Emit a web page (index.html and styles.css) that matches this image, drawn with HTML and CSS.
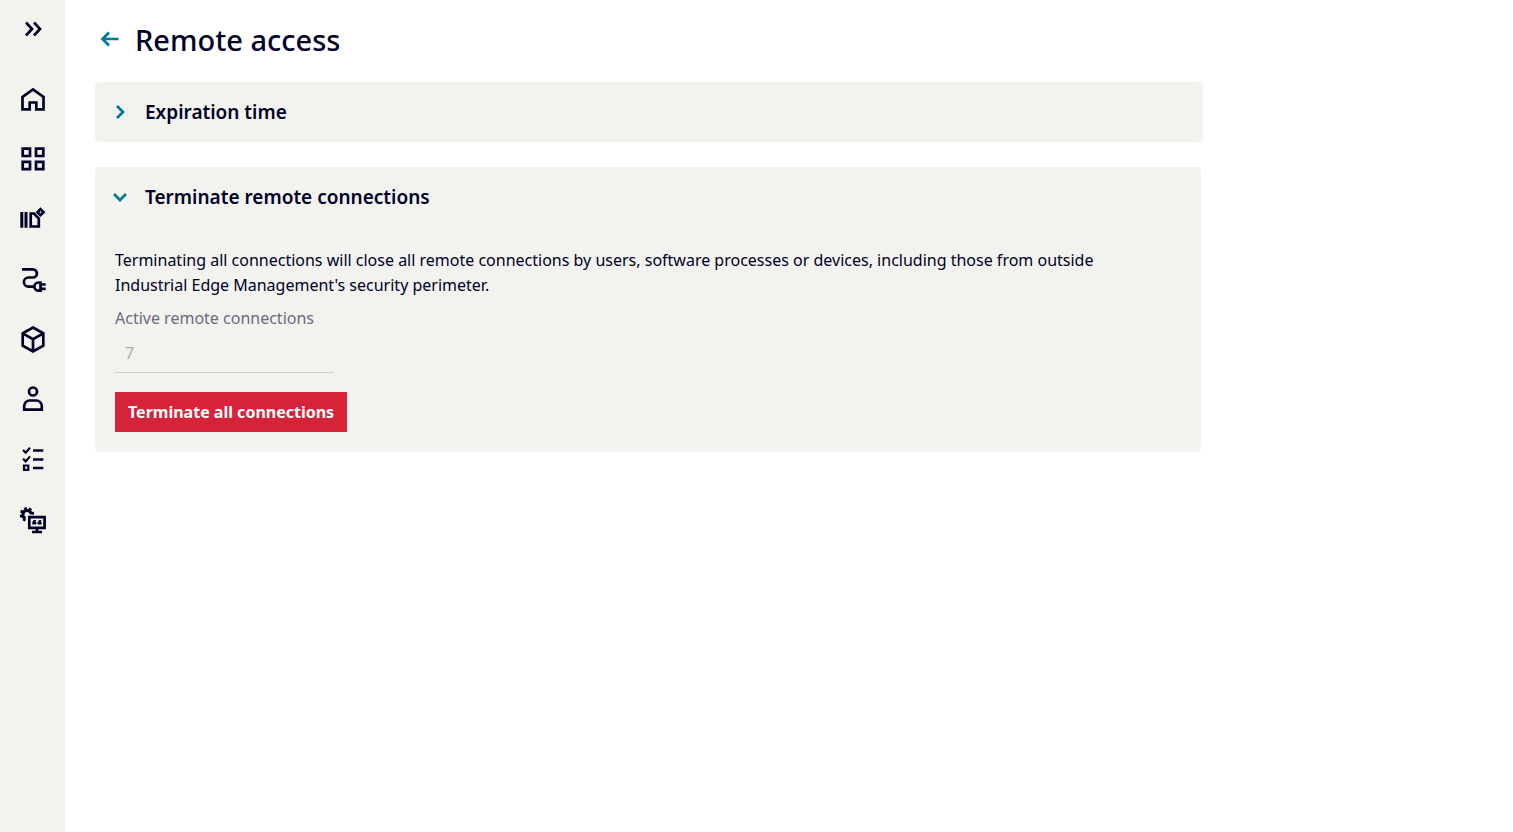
FILE: index.html
```html
<!DOCTYPE html>
<html lang="en">
<head>
    <meta charset="UTF-8">
    <meta name="viewport" content="width=device-width, initial-scale=1.0">
    <title>Remote access</title>
    <link rel="stylesheet" href="styles.css">
</head>
<body>
    <nav class="sidebar" aria-label="Main">
        <button type="button" class="expand" aria-label="Expand menu">
            <svg viewBox="0 0 46 46"><path d="M16 15.500l6 6.500-6 6.500M24 15.500l6 6.500-6 6.500"/></svg>
        </button>
        <a href="#" aria-label="Home">
            <svg viewBox="0 0 46 46"><path d="M12.500 32.300V20L23 12.400 33.500 20V32.300H26.300V25.500H19.700V32.300Z"/></svg>
        </a>
        <a href="#" aria-label="Applications">
            <svg viewBox="0 0 46 46"><path d="M12.700 11.700h7.300v7.300h-7.300zM26 11.700h7.300v7.300h-7.300zM12.700 24.900h7.300v7.300h-7.300zM26 24.900h7.300v7.300h-7.300z"/></svg>
        </a>
        <a href="#" aria-label="Catalog">
            <svg viewBox="0 0 46 46"><path class="thick" d="M11.800 15v15.800M16 15v15.800"/><path d="M20.700 29.500V16.500H24L28.800 21.500V29.500Z"/><path d="M30.500 12.200l3 3-3 3-3-3z"/></svg>
        </a>
        <a href="#" aria-label="Connectivity">
            <svg viewBox="0 0 46 46"><path d="M12 12.300H22.800a4.100 4.100 0 0 1 0 8.200H18.500a4.600 4.600 0 0 0 0 9.200H24M30.500 25.500H28.500a4.100 4.100 0 0 0 0 8.200H30.500ZM31 27.500H35.700M31 31.800H35.700"/></svg>
        </a>
        <a href="#" aria-label="Edge devices">
            <svg viewBox="0 0 46 46"><path d="M23 10.500l10.300 5.800v12.400L23 34.500l-10.300-5.800V16.300zM12.700 16.300L23 22.200l10.300-5.900M23 22.200V34.500"/></svg>
        </a>
        <a href="#" aria-label="Users">
            <svg viewBox="0 0 46 46"><circle cx="23" cy="14.500" r="4"/><path d="M14.200 32.700V29a5.500 5.500 0 0 1 5.500-5.500h6.600a5.500 5.500 0 0 1 5.500 5.500V32.700Z"/></svg>
        </a>
        <a href="#" aria-label="Jobs">
            <svg viewBox="0 0 46 46"><path d="M23 13.500H33.300M23 22.500H33.300M23 31H33.300"/><path class="thin" d="M13 13l2.700 2.700 4.300-5M13 21.700l2.700 2.700 4.300-5M14 28.500h4.300v4.300h-4.300z"/></svg>
        </a>
        <a href="#" aria-label="Administration">
            <svg viewBox="0 0 46 46"><path d="M19.300 20.200H34.600V30.800H19.300ZM27 31V35M22 35H32"/><path class="thick" d="M15.500 21.500A4.200 4.200 0 1 1 21.300 17.500"/><path class="teeth" d="M15.500 23.300A6 6 0 1 1 23 17.500"/><path class="quote" d="M22.300 27.500v-2.500l1.500-2h2.500l-1 2h1v2.500zM27.600 27.500v-2.500l1.500-2h2.500l-1 2h1v2.500z"/></svg>
        </a>
    </nav>

    <main>
        <header>
            <a href="#" class="back" aria-label="Back">
                <svg viewBox="0 0 24 24"><path d="M20.500 11H4.500M11 4.500L4.500 11l6.500 6.500"/></svg>
            </a>
            <h1>Remote access</h1>
        </header>

        <section class="card">
            <h2>
                <button type="button" class="toggle" aria-expanded="false">
                    <svg viewBox="0 0 20 20"><path d="M7 4l6 6-6 6"/></svg>
                    Expiration time
                </button>
            </h2>
        </section>

        <section class="card open">
            <h2>
                <button type="button" class="toggle" aria-expanded="true">
                    <svg viewBox="0 0 20 20"><path d="M4 7l6 6 6-6"/></svg>
                    Terminate remote connections
                </button>
            </h2>
            <div class="card-body">
                <p>Terminating all connections will close all remote connections by users, software processes or devices, including those from outside Industrial Edge Management's security perimeter.</p>
                <label for="active">Active remote connections</label>
                <input type="text" id="active" value="7" disabled>
                <button type="button" class="danger">Terminate all connections</button>
            </div>
        </section>
    </main>
</body>
</html>
```
FILE: styles.css
```css
* {
    box-sizing: border-box;
}

body {
    margin: 0;
    min-height: 100vh;
    display: flex;
    background-color: #fff;
    color: #000028;
    font-family: "Noto Sans", "Open Sans", sans-serif;
    font-size: 16px;
    line-height: 25px;
}

button, input {
    font: inherit;
    color: inherit;
    border: 0;
    background: none;
}

svg {
    display: block;
    flex: none;
    fill: none;
    stroke: currentColor;
    stroke-width: 2.7;
}

/* sidebar */
.sidebar {
    flex: none;
    width: 65px;
    background-color: #f3f3ee;
}

.sidebar a, .expand {
    display: flex;
    align-items: center;
    justify-content: center;
    width: 100%;
    height: 60px;
    padding: 0;
    color: #000028;
}

.expand {
    margin-bottom: 10px;
}

.sidebar svg {
    width: 46px;
    height: 46px;
}

.sidebar .thin {
    stroke-width: 2.2;
}

.sidebar .thick {
    stroke-width: 3;
}

.sidebar .teeth {
    stroke-width: 2.5;
    stroke-dasharray: 2.7 2;
}

.sidebar .quote {
    fill: currentColor;
    stroke: none;
}

/* content */
main {
    flex: 1;
    max-width: 1168px;
    padding: 20px 30px;
}

header {
    display: flex;
    align-items: center;
    gap: 13px;
    height: 40px;
    margin-bottom: 22px;
    padding-left: 3px;
}

.back {
    color: #007993;
}

.back svg {
    width: 24px;
    height: 24px;
}

h1 {
    margin: 0;
    font-size: 29px;
    font-weight: 500;
    line-height: 40px;
}

.card {
    margin-bottom: 25px;
    border-radius: 5px;
    background-color: #f2f3ee;
}

.open {
    margin-right: 2px;
}

h2 {
    margin: 0;
    font-size: 19px;
    font-weight: 600;
}

.toggle {
    display: flex;
    align-items: center;
    gap: 15px;
    width: 100%;
    height: 60px;
    padding: 0 15px;
    text-align: left;
}

.toggle svg {
    width: 20px;
    height: 20px;
    color: #007993;
}

.card-body {
    padding: 21px 20px 20px;
}

p {
    max-width: 1020px;
    margin: 0 0 8px;
}

label {
    display: block;
    color: #6b6b80;
}

input {
    display: block;
    width: 219px;
    height: 42px;
    margin-bottom: 19px;
    padding: 2px 10px 0;
    border-bottom: 1px solid #cccccf;
    color: #a9a9b2;
}

.danger {
    height: 40px;
    padding: 0 13px;
    background-color: #d72339;
    color: #fff;
    font-weight: 700;
}
```
